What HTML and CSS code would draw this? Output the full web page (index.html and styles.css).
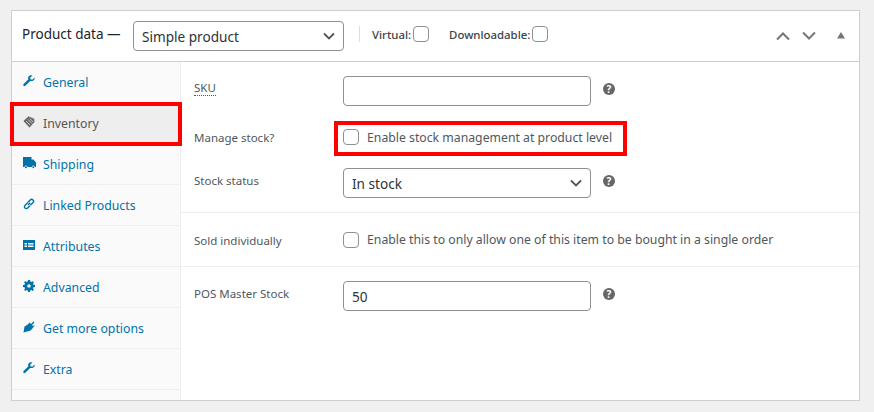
FILE: index.html

```html
<!DOCTYPE html>
<html lang="en">
<head>
  <meta charset="UTF-8">
  <title>Product data</title>
  <link rel="stylesheet" href="styles.css">
</head>
<body>
  <div class="panel">
    <div class="panel-head">
      <span class="panel-title">Product data —</span>
      <select class="product-type">
        <option>Simple product</option>
      </select>
      <span class="divider"></span>
      <label class="head-check">Virtual: <input type="checkbox"></label>
      <label class="head-check">Downloadable: <input type="checkbox"></label>
      <div class="head-actions">
        <svg width="14" height="10" viewBox="0 0 14 10"><path d="M1 8.500 7 2.500l6 6" fill="none" stroke="#72777c" stroke-width="2"/></svg>
        <svg width="14" height="10" viewBox="0 0 14 10"><path d="M1 1.500 7 7.500l6-6" fill="none" stroke="#72777c" stroke-width="2"/></svg>
        <svg width="8" height="7" viewBox="0 0 8 7"><path d="M4 0 8 6.500H0z" fill="#72777c"/></svg>
      </div>
    </div>
    <div class="panel-body">
      <ul class="tabs">
        <li>
          <svg class="tab-icon" viewBox="0 0 12 12"><path d="M11.600 2.600 9.300 4.700 7.500 4.300 7.200 2.600 9.400.5C7.800-.1 6 .4 5.400 1.800 5 2.700 5 3.600 5.400 4.300L.6 9.100c-.5.500-.5 1.200 0 1.700s1.200.5 1.700 0l4.900-4.900c1.800.6 3.600-.1 4.300-1.600.2-.6.200-1.200.1-1.700z"/></svg>
          General
        </li>
        <li class="active">
          <svg class="tab-icon" viewBox="0 0 12 12"><path d="M0 5 5.500 0l6 2.500.5 3.500-5.500 6zM3 5l4 4M5 3.500l4 4M6.800 2.500l3.500 3.500" stroke="#eee" stroke-width=".8"/></svg>
          Inventory
        </li>
        <li>
          <svg class="tab-icon tab-icon-wide" viewBox="0 0 13 12"><path d="M0 0h8.500v2.500h2L13 5.500V10h-1.200a1.500 1.500 0 0 0-3 0H4.500a1.500 1.500 0 0 0-3 0H0z"/><circle cx="3" cy="10.300" r="1"/><circle cx="10.300" cy="10.300" r="1"/></svg>
          Shipping
        </li>
        <li>
          <svg class="tab-icon" viewBox="0 0 12 12"><path d="M5 7 7.200 4.800M4.800 4.600 2 7.400a1.900 1.900 0 0 0 2.700 2.700L7 7.800M5 4.200l2.300-2.300A1.900 1.900 0 0 1 10 4.600L7.400 7.200" fill="none" stroke="#0073aa" stroke-width="1.400"/></svg>
          Linked Products
        </li>
        <li>
          <svg class="tab-icon" viewBox="0 0 12 12"><path fill-rule="evenodd" d="M0 1h12v10H0zM1.500 4v1.500H4V4zM1.500 6.500V8H4V6.500zM5 4v1.500h5.500V4zM5 6.500V8h5.500V6.500z"/></svg>
          Attributes
        </li>
        <li>
          <svg class="tab-icon" viewBox="0 0 12 12"><path fill-rule="evenodd" d="M5 0h2l.3 1.600 1.100.5L9.800 1.200l1.100 1.100-.9 1.400.5 1.100L12 5v2l-1.500.3-.5 1.100.9 1.400-1.100 1.100-1.400-.9-1.100.5L7 12H5l-.3-1.500-1.100-.5-1.400.9-1.100-1.100.9-1.400-.5-1.100L0 7V5l1.500-.3.5-1.100-.9-1.400 1.100-1.100 1.400.9 1.100-.5zM6 4.200a1.800 1.800 0 1 0 0 3.600 1.800 1.800 0 0 0 0-3.600z"/></svg>
          Advanced
        </li>
        <li>
          <svg class="tab-icon" viewBox="0 0 12 12"><path d="M.5 11.500 1.500 5.500 4.500 3.800 6.500 1.500 8 3 10.500.5 11.500 1.500 9 4 10 5 12 4 10.500 6 9 8 7.500 9.500 6 10z"/></svg>
          Get more options
        </li>
        <li>
          <svg class="tab-icon" viewBox="0 0 12 12"><path d="M11.600 2.600 9.300 4.700 7.500 4.300 7.200 2.600 9.400.5C7.800-.1 6 .4 5.400 1.800 5 2.700 5 3.600 5.400 4.300L.6 9.100c-.5.500-.5 1.200 0 1.700s1.200.5 1.700 0l4.900-4.900c1.800.6 3.600-.1 4.300-1.600.2-.6.200-1.200.1-1.700z"/></svg>
          Extra
        </li>
      </ul>
      <div class="fields">
        <div class="group">
          <div class="field">
            <label class="field-label label-sku"><span class="hint">SKU</span></label>
            <input class="text-input" type="text">
            <span class="help">?</span>
          </div>
          <div class="field">
            <label class="field-label label-plain">Manage stock?</label>
            <label class="check-text"><input type="checkbox"> Enable stock management at product level</label>
          </div>
          <div class="field">
            <label class="field-label">Stock status</label>
            <select class="text-input">
              <option>In stock</option>
            </select>
            <span class="help">?</span>
          </div>
        </div>
        <div class="group">
          <div class="field field-short">
            <label class="field-label label-sold">Sold individually</label>
            <label class="check-text"><input type="checkbox"> Enable this to only allow one of this item to be bought in a single order</label>
          </div>
        </div>
        <div class="group group-last">
          <div class="field">
            <label class="field-label">POS Master Stock</label>
            <input class="text-input" type="text" value="50">
            <span class="help">?</span>
          </div>
        </div>
      </div>
    </div>
    <div class="callout callout-tab"></div>
    <div class="callout callout-manage"></div>
  </div>
</body>
</html>
```

FILE: styles.css

```css
body {
  margin: 0;
  background-color: #f0f0f1;
  font-family: "Noto Sans", "Open Sans", sans-serif;
  font-size: 12px;
  color: #50575e;
}

.panel {
  position: relative;
  width: 847px;
  height: 389px;
  margin: 10px 0 0 11px;
  border: 1px solid #ccd0d4;
  background-color: #fff;
}

.panel-head {
  display: flex;
  align-items: center;
  height: 50px;
  padding-left: 10px;
  border-bottom: 1px solid #ccd0d4;
}

.panel-title {
  width: 111px;
  margin-bottom: 4px;
  font-size: 13.500px;
  color: #1d2327;
}

.product-type {
  width: 211px;
  height: 30px;
}

select {
  appearance: none;
  box-sizing: border-box;
  padding: 0 8px;
  border: 1px solid #8c8f94;
  border-radius: 4px;
  background: #fff url("data:image/svg+xml,%3Csvg xmlns='http://www.w3.org/2000/svg' width='12' height='8'%3E%3Cpath d='M1 1.500l5 5 5-5' fill='none' stroke='%23555' stroke-width='1.800'/%3E%3C/svg%3E") no-repeat right 8px center;
  font-family: inherit;
  font-size: 13.600px;
  color: #2c3338;
}

.divider {
  width: 1px;
  height: 16px;
  margin: 0 12px 4px 15px;
  background-color: #ddd;
}

.head-check {
  display: flex;
  align-items: center;
  gap: 2px;
  margin: 0 20px 4px 0;
  font-size: 11.400px;
  font-weight: 500;
  color: #3c434a;
}

input[type="checkbox"] {
  appearance: none;
  box-sizing: border-box;
  width: 16px;
  height: 16px;
  margin: 0;
  flex: none;
  border: 1px solid #8c8f94;
  border-radius: 4px;
  background-color: #fff;
}

.head-actions {
  display: flex;
  align-items: center;
  gap: 12px;
  margin: 0 14px 0 auto;
}

.head-actions svg:last-child {
  margin: 0 0 2px 9px;
}

.panel-body {
  display: flex;
  height: 338px;
}

.tabs {
  width: 168px;
  margin: 0;
  padding: 0;
  border-right: 1px solid #eee;
  background-color: #fafafa;
  list-style: none;
}

.tabs li {
  display: flex;
  align-items: center;
  gap: 8px;
  box-sizing: border-box;
  height: 41px;
  padding-left: 11px;
  border-bottom: 1px solid #eee;
  color: #0073aa;
  font-size: 12.300px;
}

.tabs li.active {
  background-color: #eee;
  color: #555;
}

.tab-icon {
  width: 12px;
  height: 12px;
  margin-top: -3px;
  fill: #0073aa;
}

.tab-icon-wide {
  width: 13px;
  margin-right: -1px;
}

.active .tab-icon {
  fill: #666;
}

.fields {
  flex: 1;
}

.group {
  padding: 14px 0;
  border-bottom: 1px solid #eee;
}

.group-last {
  border-bottom: none;
}

.field {
  display: flex;
  align-items: center;
  height: 30px;
  margin-bottom: 16px;
  padding-left: 13px;
}

.field:last-child {
  margin-bottom: 0;
}

.field-short {
  height: 25px;
}

.field-label {
  width: 149px;
  flex: none;
  padding-bottom: 6px;
  font-size: 11.500px;
}

.label-sku {
  padding-bottom: 7px;
}

.label-plain {
  padding-bottom: 0;
}

.label-sold {
  padding: 2px 0 0;
}

.hint {
  border-bottom: 1px dotted #50575e;
}

.text-input {
  box-sizing: border-box;
  width: 248px;
  height: 30px;
  padding: 0 8px;
  border: 1px solid #8c8f94;
  border-radius: 4px;
  font-family: inherit;
  font-size: 13.600px;
  color: #2c3338;
}

.help {
  display: flex;
  align-items: center;
  justify-content: center;
  width: 12px;
  height: 12px;
  margin: 0 0 4px 12px;
  border-radius: 50%;
  background-color: #666;
  color: #fff;
  font-size: 10px;
  font-weight: 700;
}

.check-text {
  display: flex;
  align-items: center;
  gap: 8px;
  font-size: 12.250px;
  color: #50575e;
}

.callout {
  position: absolute;
  box-sizing: border-box;
  border: 4px solid #f00;
}

.callout-tab {
  left: -2px;
  top: 91px;
  width: 172px;
  height: 44px;
}

.callout-manage {
  left: 322px;
  top: 110px;
  width: 293px;
  height: 35px;
}
```
